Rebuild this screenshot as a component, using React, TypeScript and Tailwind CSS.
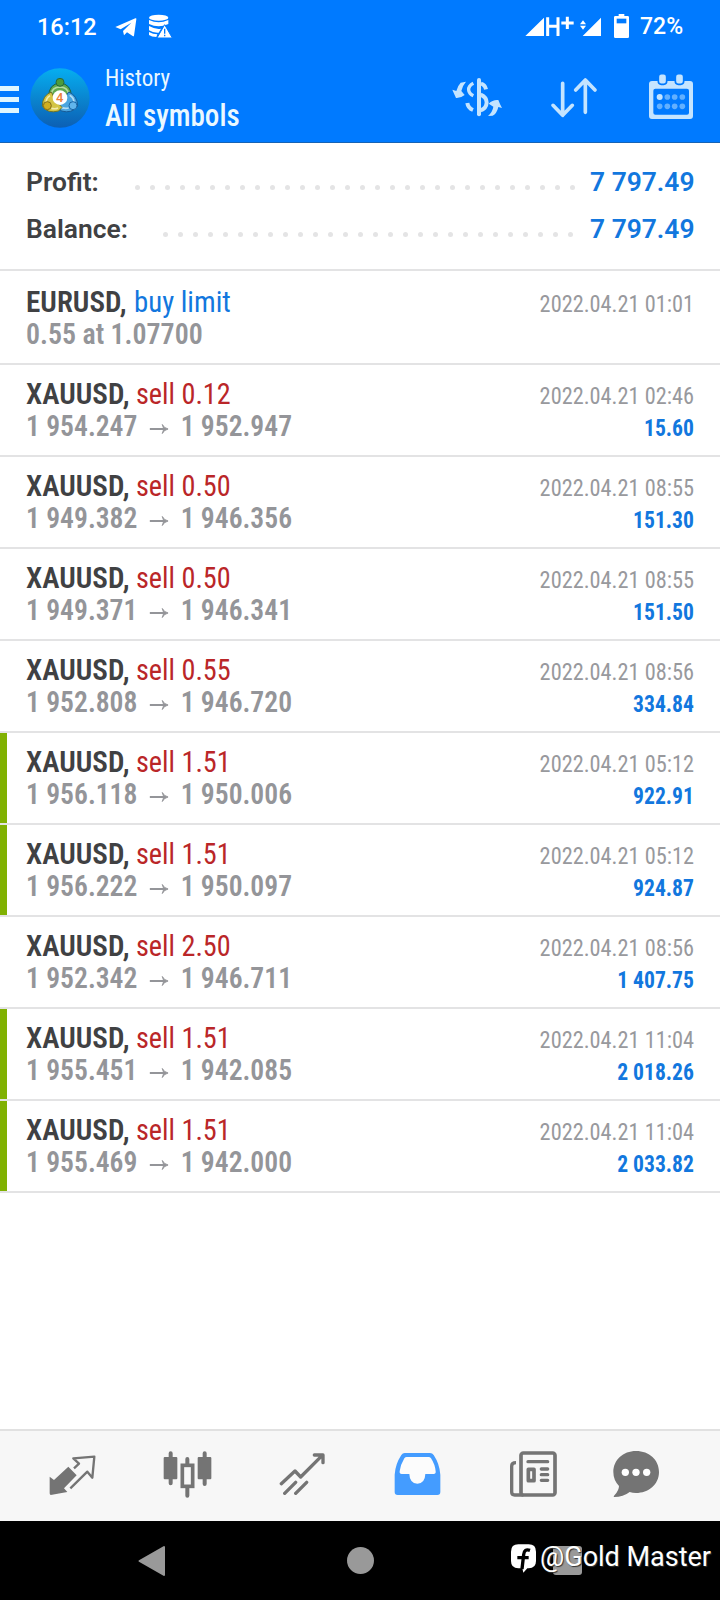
import React from 'react';

interface Deal {
  symbol: string;
  action: string;
  kind: 'buy' | 'sell';
  prices: string[];
  time: string;
  profit?: string;
  marked?: boolean;
}

const deals: Deal[] = [
  { symbol: 'EURUSD,', action: 'buy limit', kind: 'buy', prices: ['0.55 at 1.07700'], time: '2022.04.21 01:01' },
  { symbol: 'XAUUSD,', action: 'sell 0.12', kind: 'sell', prices: ['1 954.247', '1 952.947'], time: '2022.04.21 02:46', profit: '15.60' },
  { symbol: 'XAUUSD,', action: 'sell 0.50', kind: 'sell', prices: ['1 949.382', '1 946.356'], time: '2022.04.21 08:55', profit: '151.30' },
  { symbol: 'XAUUSD,', action: 'sell 0.50', kind: 'sell', prices: ['1 949.371', '1 946.341'], time: '2022.04.21 08:55', profit: '151.50' },
  { symbol: 'XAUUSD,', action: 'sell 0.55', kind: 'sell', prices: ['1 952.808', '1 946.720'], time: '2022.04.21 08:56', profit: '334.84' },
  { symbol: 'XAUUSD,', action: 'sell 1.51', kind: 'sell', prices: ['1 956.118', '1 950.006'], time: '2022.04.21 05:12', profit: '922.91', marked: true },
  { symbol: 'XAUUSD,', action: 'sell 1.51', kind: 'sell', prices: ['1 956.222', '1 950.097'], time: '2022.04.21 05:12', profit: '924.87', marked: true },
  { symbol: 'XAUUSD,', action: 'sell 2.50', kind: 'sell', prices: ['1 952.342', '1 946.711'], time: '2022.04.21 08:56', profit: '1 407.75' },
  { symbol: 'XAUUSD,', action: 'sell 1.51', kind: 'sell', prices: ['1 955.451', '1 942.085'], time: '2022.04.21 11:04', profit: '2 018.26', marked: true },
  { symbol: 'XAUUSD,', action: 'sell 1.51', kind: 'sell', prices: ['1 955.469', '1 942.000'], time: '2022.04.21 11:04', profit: '2 033.82', marked: true },
];

const StatusBar: React.FC = () => (
  <div className="flex h-[54px] text-white">
    <span className="ml-[37px] w-[78px] text-[23.5px] leading-[54px] font-medium">16:12</span>
    <svg className="mt-3 h-[30px] w-[60px]" viewBox="345 36 180 90">
      <path d="M346 81 L406 55 Q410 54 409 58 L402 107 Q401 110 398 108 L381 97 L372 106 L369 93 L394 68 L362 88 Z" fill="#fff" />
      <ellipse cx="476" cy="53" rx="29" ry="9" fill="#fff" />
      <path d="M447 60 q29 14 58 0 v12 q-29 14 -58 0z M447 78 q20 11 36 8 l-7 12 q-17 1 -29-7z M447 96 q12 7 25 7 l-3 8 q-14 0 -22-6z" fill="#fff" />
      <path d="M494 74 L517 114 H471 Z" fill="#fff" stroke="#007aff" strokeWidth="3" />
      <path d="M494 86 V101 M494 104 V109" stroke="#007aff" strokeWidth="4" />
    </svg>
    <svg className="ml-[350px] mt-3 h-[30px] w-[105px]" viewBox="255 36 315 90">
      <path d="M256 108 L312 53 V108 Z M428 108 L483 53 V108 Z" fill="#fff" />
      <path d="M323 52 V108 M354 52 V108 M323 79 H354" stroke="#fff" strokeWidth="9" />
      <path d="M382 50 V87 M364 69 H401" stroke="#fff" strokeWidth="9" />
      <path d="M420 73 L429 61 L438 73 Z M420 77 L429 89 L438 77 Z" fill="#fff" />
      <path d="M536 42 H553 V48 H563 Q567 48 567 52 V110 Q567 114 563 114 H526 Q522 114 522 110 V52 Q522 48 526 48 H536 Z" fill="#fff" />
      <path d="M530 56 H559 V70 H530 Z" fill="#007aff" />
    </svg>
    <span className="ml-[10px] text-[23px] leading-[54px] font-medium">72%</span>
  </div>
);

const AppLogo: React.FC = () => (
  <svg className="ml-[11px] h-[60px] w-[60px]" viewBox="90 204 180 180">
    <defs>
      <linearGradient id="sky" x1="0" y1="0" x2="0" y2="1">
        <stop offset="0" stopColor="#06aef0" />
        <stop offset="0.55" stopColor="#0a82cd" />
        <stop offset="1" stopColor="#0c5fb4" />
      </linearGradient>
    </defs>
    <circle cx="180" cy="294" r="89" fill="url(#sky)" />
    <path d="M146 290 Q146 252 180 249 Q214 252 214 290 L198 296 H160 Z" fill="#5fa84e" stroke="#1e6042" strokeWidth="3" />
    <path d="M154 282 Q156 262 180 261 Q203 262 206 282" fill="none" stroke="#b4dba0" strokeWidth="5" />
    <path d="M206 276 Q232 286 233 318 Q216 342 184 333 L168 314 L190 300 Z" fill="#4ba5df" stroke="#175a96" strokeWidth="3" />
    <path d="M209 286 Q222 293 222 308 M178 318 Q190 328 206 324" fill="none" stroke="#b5def5" strokeWidth="5" />
    <path d="M154 276 Q127 286 127 318 Q142 342 176 333 L186 322 L168 304 Z" fill="#d3c444" stroke="#6d7429" strokeWidth="3" />
    <path d="M150 287 Q138 295 138 308 M154 325 Q165 328 174 324" fill="none" stroke="#f3ecab" strokeWidth="5" />
    <circle cx="180" cy="247" r="12" fill="#4c9c3c" stroke="#28683c" strokeWidth="3" />
    <circle cx="142" cy="317" r="12" fill="#cfae20" stroke="#836f1c" strokeWidth="3" />
    <circle cx="219" cy="317" r="12" fill="#61b5ec" stroke="#1b65a5" strokeWidth="3" />
    <circle cx="180" cy="293" r="22" fill="#fff" />
    <text x="179" y="307" textAnchor="middle" fontSize="39" fontWeight="500" fill="#ed8038">4</text>
  </svg>
);

const Header: React.FC = () => (
  <div className="flex h-[88px] text-[#eaf8ff]">
    <div className="flex flex-1 items-start">
      <div className="mt-8 flex w-[19px] flex-col gap-[6.5px]">
        <div className="h-[4.5px] bg-[#dff6ff]" />
        <div className="h-[4.5px] bg-[#dff6ff]" />
        <div className="h-[4.5px] bg-[#dff6ff]" />
      </div>
      <div className="mt-3.5">
        <AppLogo />
      </div>
      <div className="ml-[15px] font-stretch-condensed">
        <div className="mt-2 origin-left scale-x-94 text-[24.5px] leading-8">History</div>
        <div className="mt-[5px] origin-left scale-x-91 text-[32px] leading-8 font-medium">All symbols</div>
      </div>
    </div>
    <div className="mt-[18px] mr-6 flex text-[#c4e4ff]">
      <svg className="mr-12 h-12 w-[50px]" viewBox="36 216 150 144" fill="none" stroke="currentColor">
        <path d="M117 240 V343" strokeWidth="12" strokeLinecap="round" />
        <path d="M100 250 Q85 258 86 270 Q87 281 100 287" strokeWidth="10" />
        <path d="M123 251 Q135 254 138 268 M122 284 Q140 292 140 308 Q139 325 122 331 M82 309 Q84 324 99 330" strokeWidth="12" />
        <path d="M62 248 L78 245 Q66 259 64 273 L74 285 Q62 295 48 294 Q43 283 37 269 L49 273 Q53 257 62 248 Z M144 348 Q158 335 160 320 L146 311 Q159 298 175 300 Q179 311 186 324 L175 321 Q170 342 158 347 Z" fill="currentColor" stroke="none" />
      </svg>
      <svg className="mr-[50px] h-12 w-12" viewBox="330 216 144 144" fill="none" stroke="currentColor" strokeWidth="11" strokeLinecap="round" strokeLinejoin="round">
        <path d="M368 250 V344 M339 316 L368 346 L397 316 M436 337 V242 M407 270 L436 240 L465 270" />
      </svg>
      <svg className="h-12 w-12" viewBox="624 216 144 144" fill="currentColor">
        <path fillRule="evenodd" d="M636 243 H750 Q759 243 759 252 V348 Q759 357 750 357 H636 Q627 357 627 348 V252 Q627 243 636 243 Z M646 266 Q640 266 640 272 V338 Q640 344 646 344 H741 Q747 344 747 338 V272 Q747 266 741 266 Z" />
        <rect x="655" y="221" width="25" height="32" rx="9" stroke="#007aff" strokeWidth="5" />
        <rect x="706" y="221" width="25" height="32" rx="9" stroke="#007aff" strokeWidth="5" />
        <circle cx="659" cy="291" r="9" />
        <g fill="#62b0ff">
          <circle cx="682" cy="291" r="8.5" />
          <circle cx="704" cy="291" r="8.5" />
          <circle cx="727" cy="291" r="8.5" />
          <circle cx="659" cy="319" r="8.5" />
          <circle cx="682" cy="319" r="8.5" />
          <circle cx="704" cy="319" r="8.5" />
          <circle cx="727" cy="319" r="8.5" />
        </g>
      </svg>
    </div>
  </div>
);

const SummaryRow: React.FC<{ label: string; value: string; dots: number; gap: string }> = ({ label, value, dots, gap }) => (
  <div className="flex h-[47px] items-center justify-end text-[26.4px] font-semibold">
    <span className="mt-[3px] mr-auto text-[#404143]">{label}</span>
    <div className={`mt-3 flex gap-[10px] ${gap}`}>
      {Array.from({ length: dots }, (_, i) => (
        <i key={i} className="size-[5px] rounded-full bg-[#e4e4e5]" />
      ))}
    </div>
    <span className="mt-[3px] w-[104px] text-right whitespace-nowrap text-[#1277de]">{value}</span>
  </div>
);

const DealRow: React.FC<{ deal: Deal; first: boolean }> = ({ deal, first }) => (
  <div
    className={`flex justify-between border-b-2 border-[#e3e3e4] pr-[26px] font-stretch-condensed ${
      first ? 'h-[94px] pt-[15px]' : 'h-[92px] pt-[13px]'
    }`}
  >
    <div className={`w-[7px] ${first ? '' : '-mt-[13px]'} ${deal.marked ? 'bg-[#80b102]' : ''}`} />
    <div className="ml-[19px] flex-1 text-[30px] leading-8 whitespace-nowrap">
      <div className="flex">
        <span className={`origin-left scale-x-97 font-semibold text-[#404143] ${deal.kind === 'buy' ? 'w-[108px]' : 'w-[109.5px]'}`}>
          {deal.symbol}
        </span>
        <span className={deal.kind === 'buy' ? 'origin-left scale-x-96 text-[#1277de]' : 'origin-left scale-x-94 text-[#ba2628]'}>
          {deal.action}
        </span>
      </div>
      <div className={`flex origin-left font-semibold text-[#949599] ${first ? 'scale-x-93' : 'scale-x-92'}`}>
        <span>{deal.prices[0]}</span>
        {deal.prices[1] && (
          <>
            <svg className="mt-[13px] mr-[13px] ml-[13px] h-3 w-[21px]" viewBox="0 0 20 12" preserveAspectRatio="none" fill="none" stroke="currentColor" strokeWidth="2.2">
              <path d="M0.5 6 H16" />
              <path d="M13.5 1.5 Q15 5 19.5 6 Q15 7 13.5 10.5 L15 6 Z" fill="currentColor" strokeWidth="1" />
            </svg>
            <span>{deal.prices[1]}</span>
          </>
        )}
      </div>
    </div>
    <div className="mt-0.5 text-right text-[24px] leading-8">
      <div className="origin-right scale-x-93 text-[#98999d]">{deal.time}</div>
      <div className="origin-right scale-x-90 font-bold text-[#1277de]">{deal.profit}</div>
    </div>
  </div>
);

const TabBar: React.FC = () => (
  <div className="flex h-[92px] border-t-2 border-[#e1e1e1] bg-[#f7f7f7] pt-[19px] pl-12 text-[#747474]">
    <svg className="mr-[67px] h-12 w-12" viewBox="144 90 144 144">
      <path d="M205 140 L230 166 L192 205 L202 216 L152 225 Q149 224 149 220 V170 L162 180 Z" fill="currentColor" />
      <path d="M211 205 L262 155 L277 173 L283 110 L220 115 L237 131 L222 145" fill="none" stroke="currentColor" strokeWidth="7" strokeLinejoin="round" />
    </svg>
    <svg className="mr-[68px] h-12 w-12 overflow-visible" viewBox="489 90 144 144" stroke="currentColor">
      <path d="M512 100 V190 M614 100 V192 M562 117 V132 M562 204 V227" strokeWidth="12" strokeLinecap="round" />
      <rect x="491" y="111" width="41" height="67" rx="3" fill="currentColor" stroke="none" />
      <rect x="593" y="111" width="41" height="67" rx="3" fill="currentColor" stroke="none" />
      <rect x="547" y="136" width="31" height="63" fill="#f7f7f7" strokeWidth="11" />
    </svg>
    <svg className="mr-[66px] h-12 w-12" viewBox="117 90 144 144" fill="none" stroke="currentColor" strokeWidth="10" strokeLinecap="round" strokeLinejoin="round">
      <path d="M124 191 L165 153 L182 171 L246 107 M223 105 H249 V128 M134 220 L167 187 M167 220 L200 187" />
    </svg>
    <svg className="mr-[68px] h-12 w-12" viewBox="459 90 144 144">
      <path d="M494 99 H570 Q577 99 581 105 Q599 132 601 164 V216 Q601 225 592 225 H473 Q464 225 464 216 V164 Q466 132 484 105 Q488 99 494 99 Z" fill="#449cff" />
      <path d="M500 111 H566 Q570 111 573 115 Q585 133 587 154 Q588 162 581 162 H556 Q555 190 532 191 Q509 190 508 162 H485 Q478 162 479 154 Q482 133 493 115 Q496 111 500 111 Z" fill="#fcfcfc" />
    </svg>
    <svg className="mr-[55px] h-12 w-12" viewBox="87 90 144 144" fill="none" stroke="currentColor">
      <rect x="123" y="99" width="102" height="126" rx="7" strokeWidth="11" />
      <path d="M108 128 Q95 128 95 138 V216 Q95 225 104 225 H130" strokeWidth="10" />
      <path d="M144 125 H203 M184 147 H203 M184 164 H203 M184 181 H203" strokeWidth="10" strokeLinecap="round" />
      <rect x="145" y="148" width="17" height="34" strokeWidth="11" strokeLinejoin="round" />
    </svg>
    <svg className="h-12 w-12" viewBox="396 90 144 144">
      <path d="M468 93 C508 93 537 120 537 156 C537 194 505 219 468 219 Q458 219 449 216 Q430 231 402 231 Q399 229 404 225 Q417 211 417 198 Q400 180 400 156 C400 120 429 93 468 93 Z" fill="currentColor" />
      <g fill="#fff">
        <circle cx="436" cy="157" r="11" />
        <circle cx="468" cy="157" r="11" />
        <circle cx="500" cy="157" r="11" />
      </g>
    </svg>
  </div>
);

const SystemBar: React.FC = () => (
  <div className="relative flex h-[79px] items-center bg-black">
    <svg className="ml-[138px] h-8 w-7" viewBox="0 0 28 32">
      <path d="M1.5 16 L26 2 V30 Z" fill="#999" stroke="#999" strokeWidth="2" strokeLinejoin="round" />
    </svg>
    <div className="ml-[181px] size-[27px] rounded-full bg-[#999]" />
    <div className="ml-[179px] size-[29px] rounded-[3px] bg-[#999]" />
    <div className="absolute top-[15px] left-[511px] flex items-center text-white">
      <svg className="mt-0.5 h-[30px] w-[26px]" viewBox="94 368 78 90">
        <path d="M116 372 H147 Q169 372 169 394 V422 Q169 444 147 444 H143 L131 457 L128 444 H116 Q94 444 94 422 V394 Q94 372 116 372 Z" fill="#fff" />
        <path d="M151 390 Q134 384 132 403 L127 446 M113 412 H147" fill="none" stroke="#000" strokeWidth="10" />
      </svg>
      <span className="ml-[3px] text-[27px] leading-[42px] whitespace-nowrap [text-shadow:1px_1px_1px_#333]">@Gold Master</span>
    </div>
  </div>
);

export default function App() {
  return (
    <div className="flex h-[1600px] w-[720px] flex-col overflow-hidden bg-white font-[Roboto,sans-serif]">
      <header className="h-[143px] border-b border-[#1763b5] bg-[#007aff]">
        <StatusBar />
        <Header />
      </header>
      <section className="h-32 border-b-2 border-[#e3e3e4] px-[26px] pt-[15px]">
        <SummaryRow label="Profit:" value="7 797.49" dots={30} gap="mr-[15px]" />
        <SummaryRow label="Balance:" value="7 797.49" dots={28} gap="mr-[17px]" />
      </section>
      <main className="flex-1">
        {deals.map((deal, i) => (
          <DealRow key={i} deal={deal} first={i === 0} />
        ))}
      </main>
      <TabBar />
      <SystemBar />
    </div>
  );
}
